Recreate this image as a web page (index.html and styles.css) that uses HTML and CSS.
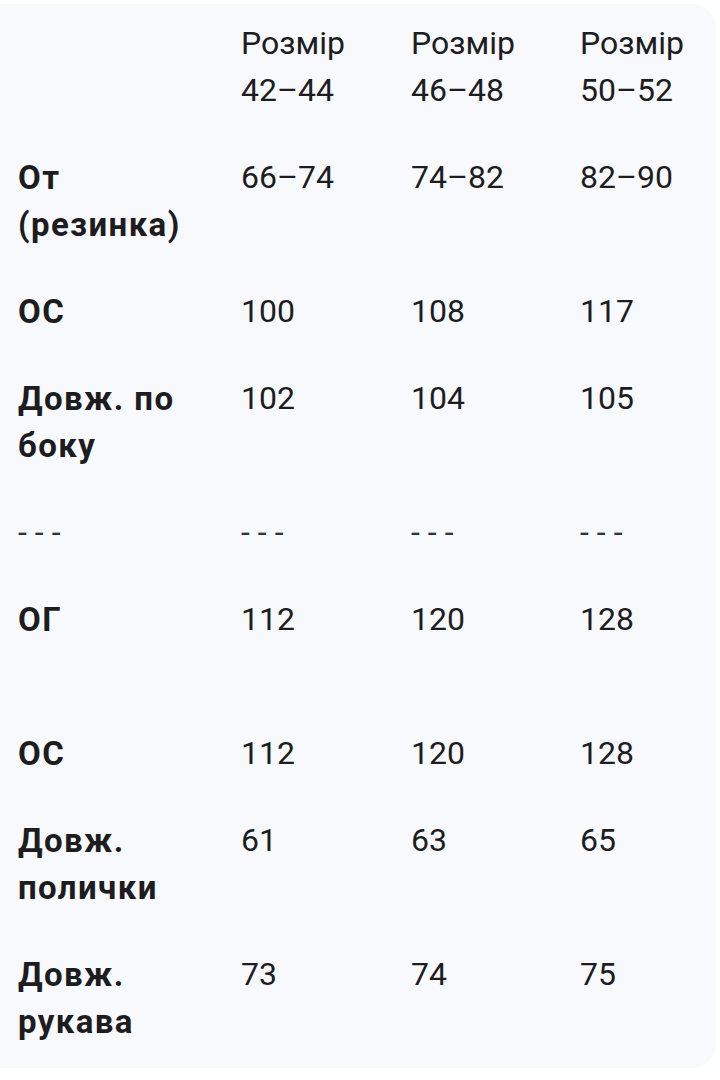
FILE: index.html
```html
<!DOCTYPE html>
<html lang="uk">
<head>
<meta charset="utf-8">
<link rel="stylesheet" href="styles.css">
</head>
<body>
<div class="card">
  <div class="grid">
    <div class="cell label"></div>
    <div class="cell">Розмір<br>42–44</div>
    <div class="cell">Розмір<br>46–48</div>
    <div class="cell">Розмір<br>50–52</div>

    <div class="cell label">От<br>(резинка)</div>
    <div class="cell">66–74</div>
    <div class="cell">74–82</div>
    <div class="cell">82–90</div>

    <div class="cell label">ОС</div>
    <div class="cell">100</div>
    <div class="cell">108</div>
    <div class="cell">117</div>

    <div class="cell label">Довж. по<br>боку</div>
    <div class="cell">102</div>
    <div class="cell">104</div>
    <div class="cell">105</div>

    <div class="cell dash">---</div>
    <div class="cell dash">---</div>
    <div class="cell dash">---</div>
    <div class="cell dash">---</div>

    <div class="cell label">ОГ<br>&nbsp;</div>
    <div class="cell">112</div>
    <div class="cell">120</div>
    <div class="cell">128</div>

    <div class="cell label">ОС</div>
    <div class="cell">112</div>
    <div class="cell">120</div>
    <div class="cell">128</div>

    <div class="cell label">Довж.<br>полички</div>
    <div class="cell">61</div>
    <div class="cell">63</div>
    <div class="cell">65</div>

    <div class="cell label">Довж.<br>рукава</div>
    <div class="cell">73</div>
    <div class="cell">74</div>
    <div class="cell">75</div>
  </div>
</div>
</body>
</html>
```

FILE: styles.css
```css
html, body {
  margin: 0;
  padding: 0;
  background: #ffffff;
}
body {
  width: 720px;
  height: 1080px;
  overflow: hidden;
  font-family: Roboto, "Noto Sans", "Liberation Sans", sans-serif;
  color: #1d1d1f;
}
.card {
  margin: 4px 4px 0 -24px;
  height: 1064px;
  background: #f8f9fc;
  border-radius: 24px;
  padding: 0 0 0 42px;
  box-sizing: border-box;
}
.grid {
  display: grid;
  grid-template-columns: 223px 170px 169px 1fr;
  row-gap: 40px;
  padding-top: 16px;
}
.cell {
  font-size: 32px;
  line-height: 47px;
  font-weight: 400;
}
.label {
  font-size: 33px;
  font-weight: 700;
  letter-spacing: 1.4px;
}
.dash {
  letter-spacing: 8px;
  color: #333336;
}
```
